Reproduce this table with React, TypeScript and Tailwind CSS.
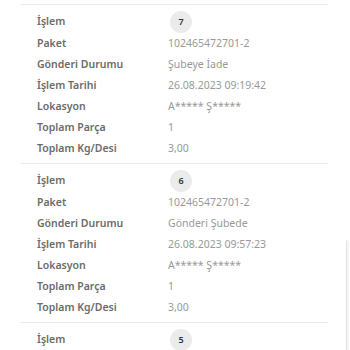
const records = [
  {
    step: 7,
    paket: "102465472701-2",
    durum: "Şubeye İade",
    tarih: "26.08.2023 09:19:42",
    lokasyon: "A***** Ş*****",
    parca: "1",
    desi: "3,00",
  },
  {
    step: 6,
    paket: "102465472701-2",
    durum: "Gönderi Şubede",
    tarih: "26.08.2023 09:57:23",
    lokasyon: "A***** Ş*****",
    parca: "1",
    desi: "3,00",
  },
];

function Row({ label, value }: { label: string; value: string }) {
  return (
    <div className="flex h-[21px] items-center">
      <div className="w-[131px] shrink-0 font-semibold text-[#6b6b6b]">{label}</div>
      <div className="text-[#999999]">{value}</div>
    </div>
  );
}

function StepRow({ step }: { step: number }) {
  return (
    <div className="flex h-[23px] items-center">
      <div className="w-[131px] shrink-0 font-semibold text-[#6b6b6b]">İşlem</div>
      <div className="ml-[2px] flex h-[22px] w-[22px] items-center justify-center rounded-full bg-[#ebebeb] text-[9px] font-semibold text-[#333]">
        {step}
      </div>
    </div>
  );
}

export default function App() {
  return (
    <div
      className="relative h-[350px] w-[350px] overflow-hidden bg-white pt-[4px] text-[10.5px]"
      style={{ fontFamily: '"Noto Sans", "Open Sans", sans-serif' }}
    >
      <div className="mx-[20px] w-[308px]">
        {records.map((r) => (
          <div key={r.step} className="border-t border-[#ebebeb] pb-[4px] pl-[17px] pt-[5px]">
            <StepRow step={r.step} />
            <Row label="Paket" value={r.paket} />
            <Row label="Gönderi Durumu" value={r.durum} />
            <Row label="İşlem Tarihi" value={r.tarih} />
            <Row label="Lokasyon" value={r.lokasyon} />
            <Row label="Toplam Parça" value={r.parca} />
            <Row label="Toplam Kg/Desi" value={r.desi} />
          </div>
        ))}
        <div className="border-t border-[#ebebeb] pl-[17px] pt-[5px]">
          <StepRow step={5} />
        </div>
      </div>
      {/* scrollbar thumb */}
      <div className="absolute right-[1px] top-[240px] h-[120px] w-[3px] rounded-sm border-l border-[#e2e2e2] bg-[#f5f5f5]" />
    </div>
  );
}
